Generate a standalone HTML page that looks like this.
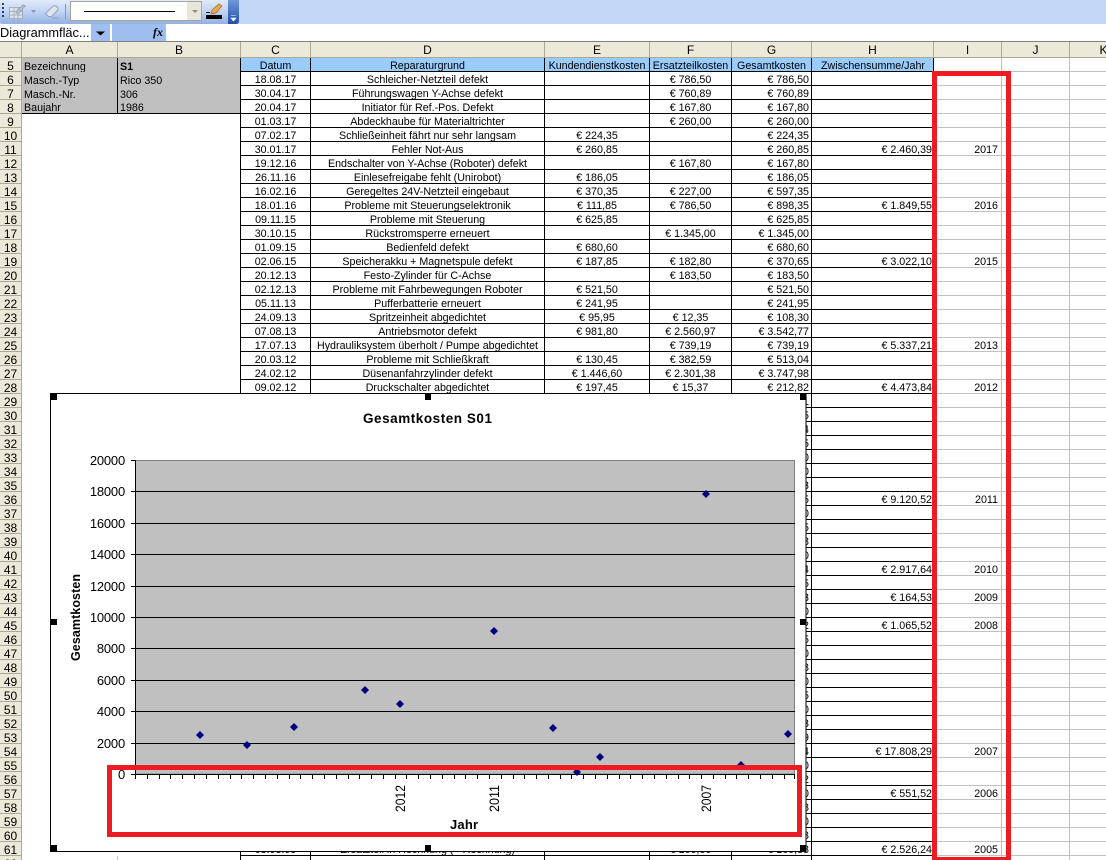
<!DOCTYPE html>
<html lang="de"><head><meta charset="utf-8"><title>Gesamtkosten</title>
<style>
html,body{margin:0;padding:0;width:1106px;height:860px;overflow:hidden;background:#fff}
body{position:relative;font-family:"Liberation Sans",Arial,sans-serif;font-size:10.7px;color:#000}
#tb{position:absolute;left:0;top:0;width:1106px;height:24px;background:#c3d8f7}
#tb1{position:absolute;left:0;top:0;width:232px;height:24px;background:linear-gradient(#dfeafb,#c3d6f5 45%,#93b0e2);border-radius:0 0 3px 3px}
#fb{position:absolute;left:0;top:24px;width:1106px;height:17px;background:#fff;border-bottom:1px solid #808080}
#nb{position:absolute;left:0;top:0;font-size:12.8px;line-height:17px;white-space:nowrap}
#b1{position:absolute;left:91px;top:0;width:19px;height:17px;background:#a0bdf0}
#b2{position:absolute;left:112px;top:0;width:54px;height:17px;background:#a0bdf0}
#fx{position:absolute;left:153px;top:0;font:italic bold 12px/17px "Liberation Serif",serif}
table{position:absolute;left:0;top:42px;border-collapse:separate;border-spacing:0;table-layout:fixed;width:1138px}
th,td{box-sizing:border-box;height:14px;padding:3px 2px 0;border-right:1px solid #000;border-bottom:1px solid #000;line-height:10px;font-weight:normal;white-space:nowrap;overflow:hidden;text-align:center}
tr.h th{height:16px;background:#ece9d8;border-color:#aca899;padding-top:2px;line-height:13px}
th{background:#ece9d8;border-color:#aca899!important;font-size:12px}
td:nth-child(2),td:nth-child(3){border-bottom:0;text-align:left}
td:nth-child(2){border-right:0}
td:nth-child(3){border-right-color:#000}
td:nth-child(8),td:nth-child(9),td:nth-child(10){text-align:right}
td:nth-child(9){padding-right:1px}
td:nth-child(10){padding-right:3px}
td:nth-child(10),td:nth-child(11),td:nth-child(12){border-color:#c0c0c0}
tr.g td:nth-child(2),tr.g td:nth-child(3){background:#c0c0c0}
tr.g td:nth-child(2){border-right:1px solid #000}
tr.l td:nth-child(2),tr.l td:nth-child(3){border-bottom:1px solid #000}
tr.b td:nth-child(n+4):nth-child(-n+9){background:#99ccff;text-align:center}
svg{position:absolute;left:0;top:0}
</style></head><body>
<div id="tb"><div id="tb1"></div></div>
<div id="fb"><div id="nb">Diagrammfläc...</div><div id="b1"></div><div id="b2"></div><div id="fx">fx</div></div>
<table>
<colgroup><col style="width:22px"><col style="width:96px"><col style="width:123px"><col style="width:70px"><col style="width:234px"><col style="width:105px"><col style="width:82px"><col style="width:80px"><col style="width:122px"><col style="width:68px"><col style="width:68px"><col style="width:68px"></colgroup>
<tr class="h"><th><th>A<th>B<th>C<th>D<th>E<th>F<th>G<th>H<th>I<th>J<th>K</tr>
<tr class="g b"><th>5<td>Bezeichnung<td><b>S1</b><td>Datum<td>Reparaturgrund<td>Kundendienstkosten<td>Ersatzteilkosten<td>Gesamtkosten<td>Zwischensumme/Jahr<td><td><td></tr>
<tr class="g"><th>6<td>Masch.-Typ<td>Rico 350<td>18.08.17<td>Schleicher-Netzteil defekt<td><td>€ 786,50<td>€ 786,50<td><td><td><td></tr>
<tr class="g"><th>7<td>Masch.-Nr.<td>306<td>30.04.17<td>Führungswagen Y-Achse defekt<td><td>€ 760,89<td>€ 760,89<td><td><td><td></tr>
<tr class="g l"><th>8<td>Baujahr<td>1986<td>20.04.17<td>Initiator für Ref.-Pos. Defekt<td><td>€ 167,80<td>€ 167,80<td><td><td><td></tr>
<tr><th>9<td><td><td>01.03.17<td>Abdeckhaube für Materialtrichter<td><td>€ 260,00<td>€ 260,00<td><td><td><td></tr>
<tr><th>10<td><td><td>07.02.17<td>Schließeinheit fährt nur sehr langsam<td>€ 224,35<td><td>€ 224,35<td><td><td><td></tr>
<tr><th>11<td><td><td>30.01.17<td>Fehler Not-Aus<td>€ 260,85<td><td>€ 260,85<td>€ 2.460,39<td>2017<td><td></tr>
<tr><th>12<td><td><td>19.12.16<td>Endschalter von Y-Achse (Roboter) defekt<td><td>€ 167,80<td>€ 167,80<td><td><td><td></tr>
<tr><th>13<td><td><td>26.11.16<td>Einlesefreigabe fehlt (Unirobot)<td>€ 186,05<td><td>€ 186,05<td><td><td><td></tr>
<tr><th>14<td><td><td>16.02.16<td>Geregeltes 24V-Netzteil eingebaut<td>€ 370,35<td>€ 227,00<td>€ 597,35<td><td><td><td></tr>
<tr><th>15<td><td><td>18.01.16<td>Probleme mit Steuerungselektronik<td>€ 111,85<td>€ 786,50<td>€ 898,35<td>€ 1.849,55<td>2016<td><td></tr>
<tr><th>16<td><td><td>09.11.15<td>Probleme mit Steuerung<td>€ 625,85<td><td>€ 625,85<td><td><td><td></tr>
<tr><th>17<td><td><td>30.10.15<td>Rückstromsperre erneuert<td><td>€ 1.345,00<td>€ 1.345,00<td><td><td><td></tr>
<tr><th>18<td><td><td>01.09.15<td>Bedienfeld defekt<td>€ 680,60<td><td>€ 680,60<td><td><td><td></tr>
<tr><th>19<td><td><td>02.06.15<td>Speicherakku + Magnetspule defekt<td>€ 187,85<td>€ 182,80<td>€ 370,65<td>€ 3.022,10<td>2015<td><td></tr>
<tr><th>20<td><td><td>20.12.13<td>Festo-Zylinder für C-Achse<td><td>€ 183,50<td>€ 183,50<td><td><td><td></tr>
<tr><th>21<td><td><td>02.12.13<td>Probleme mit Fahrbewegungen Roboter<td>€ 521,50<td><td>€ 521,50<td><td><td><td></tr>
<tr><th>22<td><td><td>05.11.13<td>Pufferbatterie erneuert<td>€ 241,95<td><td>€ 241,95<td><td><td><td></tr>
<tr><th>23<td><td><td>24.09.13<td>Spritzeinheit abgedichtet<td>€ 95,95<td>€ 12,35<td>€ 108,30<td><td><td><td></tr>
<tr><th>24<td><td><td>07.08.13<td>Antriebsmotor defekt<td>€ 981,80<td>€ 2.560,97<td>€ 3.542,77<td><td><td><td></tr>
<tr><th>25<td><td><td>17.07.13<td>Hydrauliksystem überholt / Pumpe abgedichtet<td><td>€ 739,19<td>€ 739,19<td>€ 5.337,21<td>2013<td><td></tr>
<tr><th>26<td><td><td>20.03.12<td>Probleme mit Schließkraft<td>€ 130,45<td>€ 382,59<td>€ 513,04<td><td><td><td></tr>
<tr><th>27<td><td><td>24.02.12<td>Düsenanfahrzylinder defekt<td>€ 1.446,60<td>€ 2.301,38<td>€ 3.747,98<td><td><td><td></tr>
<tr><th>28<td><td><td>09.02.12<td>Druckschalter abgedichtet<td>€ 197,45<td>€ 15,37<td>€ 212,82<td>€ 4.473,84<td>2012<td><td></tr>
<tr><th>29<td><td><td><td><td><td><td>1<td><td><td><td></tr>
<tr><th>30<td><td><td><td><td><td><td>5<td><td><td><td></tr>
<tr><th>31<td><td><td><td><td><td><td>4<td><td><td><td></tr>
<tr><th>32<td><td><td><td><td><td><td>5<td><td><td><td></tr>
<tr><th>33<td><td><td><td><td><td><td>0<td><td><td><td></tr>
<tr><th>34<td><td><td><td><td><td><td>0<td><td><td><td></tr>
<tr><th>35<td><td><td><td><td><td><td>3<td><td><td><td></tr>
<tr><th>36<td><td><td><td><td><td><td>5<td>€ 9.120,52<td>2011<td><td></tr>
<tr><th>37<td><td><td><td><td><td><td>0<td><td><td><td></tr>
<tr><th>38<td><td><td><td><td><td><td>5<td><td><td><td></tr>
<tr><th>39<td><td><td><td><td><td><td>8<td><td><td><td></tr>
<tr><th>40<td><td><td><td><td><td><td>0<td><td><td><td></tr>
<tr><th>41<td><td><td><td><td><td><td>4<td>€ 2.917,64<td>2010<td><td></tr>
<tr><th>42<td><td><td><td><td><td><td>5<td><td><td><td></tr>
<tr><th>43<td><td><td><td><td><td><td>3<td>€ 164,53<td>2009<td><td></tr>
<tr><th>44<td><td><td><td><td><td><td>0<td><td><td><td></tr>
<tr><th>45<td><td><td><td><td><td><td>2<td>€ 1.065,52<td>2008<td><td></tr>
<tr><th>46<td><td><td><td><td><td><td>5<td><td><td><td></tr>
<tr><th>47<td><td><td><td><td><td><td>0<td><td><td><td></tr>
<tr><th>48<td><td><td><td><td><td><td>8<td><td><td><td></tr>
<tr><th>49<td><td><td><td><td><td><td>0<td><td><td><td></tr>
<tr><th>50<td><td><td><td><td><td><td>5<td><td><td><td></tr>
<tr><th>51<td><td><td><td><td><td><td>0<td><td><td><td></tr>
<tr><th>52<td><td><td><td><td><td><td>3<td><td><td><td></tr>
<tr><th>53<td><td><td><td><td><td><td>9<td><td><td><td></tr>
<tr><th>54<td><td><td><td><td><td><td>4<td>€ 17.808,29<td>2007<td><td></tr>
<tr><th>55<td><td><td><td><td><td><td>0<td><td><td><td></tr>
<tr><th>56<td><td><td><td><td><td><td>2<td><td><td><td></tr>
<tr><th>57<td><td><td><td><td><td><td>0<td>€ 551,52<td>2006<td><td></tr>
<tr><th>58<td><td><td><td><td><td><td>8<td><td><td><td></tr>
<tr><th>59<td><td><td><td><td><td><td>0<td><td><td><td></tr>
<tr><th>60<td><td><td><td><td><td><td>8<td><td><td><td></tr>
<tr><th>61<td><td><td>03.03.05<td>Ersatzteil in Rechnung (+ Rechnung)<td><td>€ 160,00<td>€ 160,88<td>€ 2.526,24<td>2005<td><td></tr>
<tr><th>62<td style="border-right:1px solid #c0c0c0"><td style="border-right-color:#000"><td><td><td><td><td><td><td><td></tr>
</table>

<svg width="1106" height="860" viewBox="0 0 1106 860" font-family="Liberation Sans, Arial, sans-serif">
<!-- toolbar -->
<path d="M3 3v14" stroke="#27417a" stroke-width="2" stroke-dasharray="2 2"/>
<path d="M9.500 7.500h13v11h-13zM9.500 11.500h13M9.500 15h13M14 7.500v11M18 7.500v11" fill="#dfe5ef" stroke="#a6aebd"/>
<path d="M16 12L23 5l2 1-7 8z" fill="#c4cad5" stroke="#99a1b0"/>
<path d="M31 10h5l-2.500 3z" fill="#8a93a5"/>
<path d="M45.500 13.500l7-7c2-1.500 4-.5 5 1 1 1 .5 2.500-.5 3.500l-5.500 5.500h-3z" fill="#dfe5ef" stroke="#98a1b2"/>
<path d="M52 18h7" stroke="#98a1b2"/>
<path d="M65.500 4v15" stroke="#7f9bc8"/>
<rect x="70.500" y="1.500" width="131" height="19" fill="#fff" stroke="#a5a598"/>
<rect x="187" y="2" width="14" height="18" fill="#e9e7d9"/>
<path d="M192 10h6l-3 3z" fill="#8d8d80"/>
<path d="M84 11.500h91" stroke="#000"/>
<path d="M212 10l7-6 3 2-6 7-5 1z" fill="#e8a94a" stroke="#a8642a" stroke-width=".7"/>
<path d="M206 12.500h4" stroke="#000"/>
<rect x="206" y="15" width="16" height="4" fill="#000"/>
<defs><linearGradient id="eg" x1="0" y1="0" x2="0" y2="1"><stop offset="0" stop-color="#6f99dc"/><stop offset="1" stop-color="#1f4fa8"/></linearGradient></defs>
<path d="M228 0h11v21q0 3-3 3h-8z" fill="url(#eg)"/>
<path d="M231 15.500h5M231 18h5l-2.500 3z" fill="#fff" stroke="#fff" stroke-width=".6"/>
<path d="M96 31.500h9l-4.500 4z" fill="#000"/>

<!-- chart -->
<rect x="50.500" y="393.500" width="755.500" height="458" fill="#fff" stroke="#000"/>
<text x="363" y="423" font-size="13.500" font-weight="bold" textLength="129" lengthAdjust="spacing">Gesamtkosten S01</text>
<rect x="135.500" y="460.500" width="659" height="313.500" fill="#c0c0c0" stroke="#808080"/>
<path d="M135.500 460v318" stroke="#000"/>
<path d="M131 460.500h4M131 491.500H795M131 523.500H795M131 554.500H795M131 586.500H795M131 617.500H795M131 648.500H795M131 680.500H795M131 711.500H795M131 743.500H795M131 774.500H795" stroke="#000" fill="none"/>
<path d="M135.500 774v5M147.500 774v5M159.500 774v5M170.500 774v5M182.500 774v5M194.500 774v5M206.500 774v5M218.500 774v5M230.500 774v5M241.500 774v5M253.500 774v5M265.500 774v5M277.500 774v5M289.500 774v5M300.500 774v5M312.500 774v5M324.500 774v5M336.500 774v5M348.500 774v5M359.500 774v5M371.500 774v5M383.500 774v5M395.500 774v5M406.500 774v5M418.500 774v5M430.500 774v5M442.500 774v5M454.500 774v5M465.500 774v5M477.500 774v5M489.500 774v5M501.500 774v5M513.500 774v5M524.500 774v5M536.500 774v5M548.500 774v5M560.500 774v5M571.500 774v5M583.500 774v5M595.500 774v5M607.500 774v5M619.500 774v5M630.500 774v5M642.500 774v5M654.500 774v5M666.500 774v5M678.500 774v5M689.500 774v5M701.500 774v5M713.500 774v5M725.500 774v5M736.500 774v5M748.500 774v5M760.500 774v5M772.500 774v5M784.500 774v5M794.500 774v5" stroke="#000"/>
<g font-size="13" text-anchor="end" letter-spacing="-.2">
<text x="125" y="465">20000</text><text x="125" y="496">18000</text><text x="125" y="528">16000</text><text x="125" y="559">14000</text><text x="125" y="591">12000</text><text x="125" y="622">10000</text><text x="125" y="653">8000</text><text x="125" y="685">6000</text><text x="125" y="716">4000</text><text x="125" y="748">2000</text><text x="125" y="779">0</text>
</g>
<g fill="#000080">
<path d="M200 731l4 4-4 4-4-4zM247 741l4 4-4 4-4-4zM294 723l4 4-4 4-4-4zM365 686l4 4-4 4-4-4zM400 700l4 4-4 4-4-4zM494 627l4 4-4 4-4-4zM553 724l4 4-4 4-4-4zM577 768l4 4-4 4-4-4zM600 753l4 4-4 4-4-4zM706 490l4 4-4 4-4-4zM741 761l4 4-4 4-4-4zM788 730l4 4-4 4-4-4z"/>
</g>
<g font-size="14">
<text transform="translate(405 812) rotate(-90)" textLength="27" lengthAdjust="spacingAndGlyphs">2012</text>
<text transform="translate(499 812) rotate(-90)" textLength="27" lengthAdjust="spacingAndGlyphs">2011</text>
<text transform="translate(711 812) rotate(-90)" textLength="27" lengthAdjust="spacingAndGlyphs">2007</text>
</g>
<text transform="translate(80 661) rotate(-90)" font-size="12.500" font-weight="bold" textLength="87" lengthAdjust="spacing">Gesamtkosten</text>
<text x="450" y="829" font-size="13" font-weight="bold" textLength="28" lengthAdjust="spacing">Jahr</text>
<g fill="#000">
<rect x="51" y="394" width="6" height="6"/><rect x="425" y="394" width="6" height="6"/><rect x="800" y="394" width="6" height="6"/>
<rect x="51" y="619" width="6" height="6"/><rect x="800" y="619" width="6" height="6"/>
<rect x="51" y="845" width="6" height="6"/><rect x="425" y="845" width="6" height="6"/><rect x="800" y="845" width="6" height="6"/>
</g>
<!-- red frames -->
<rect x="934.500" y="73.500" width="74" height="786" fill="none" stroke="#ed1c24" stroke-width="5"/>
<rect x="109.500" y="767.500" width="690" height="67" fill="none" stroke="#ed1c24" stroke-width="5"/>
</svg>
</body></html>
